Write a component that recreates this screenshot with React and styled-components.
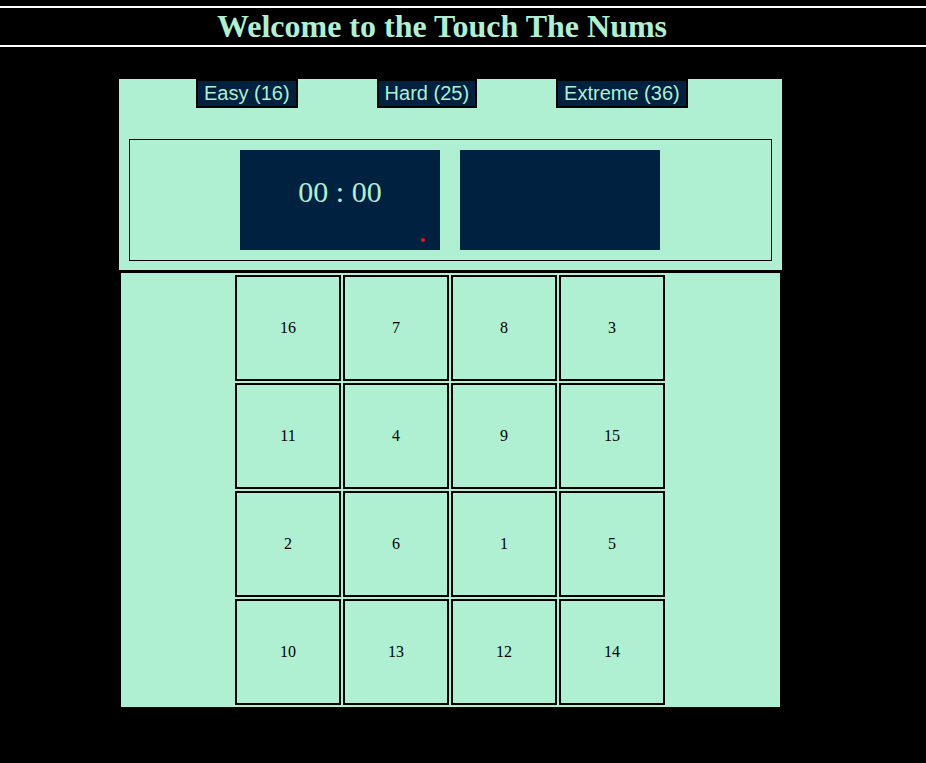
import React from "react";
import styled, { createGlobalStyle } from "styled-components";

const MINT = "#aef0d1";
const NAVY = "#002140";

const Global = createGlobalStyle`
  html, body { margin: 0; padding: 0; background: #000; }
  body { font-family: "Liberation Serif", "Times New Roman", serif; }
`;

const Page = styled.div`
  background: #000;
  min-height: 763px;
  box-sizing: border-box;
  padding-top: 6px;
`;

const Title = styled.h1`
  margin: 0;
  border-top: 2px solid #fff;
  border-bottom: 2px solid #fff;
  color: ${MINT};
  font-family: "Liberation Serif", "Times New Roman", serif;
  font-size: 32px;
  font-weight: bold;
  line-height: 37px;
  text-align: center;
  padding-right: 42px;
`;

const Game = styled.div`
  margin-top: 32px;
  display: flex;
  flex-direction: column;
  align-items: flex-start;
  padding-left: 119px;
`;

const TopPanel = styled.div`
  width: 663px;
  box-sizing: border-box;
  height: 191px;
  background: ${MINT};
  padding: 0 10px;
`;

const Levels = styled.div`
  display: flex;
  gap: 79px;
  padding-left: 67px;
`;

const LevelButton = styled.button`
  font-family: "Liberation Sans", Arial, sans-serif;
  font-size: 20px;
  line-height: 23px;
  padding: 1px 6px;
  border: 2px solid #000;
  background: ${NAVY};
  color: ${MINT};
  cursor: pointer;
`;

const Scoreboard = styled.div`
  margin-top: 31px;
  border: 1px solid #000;
  height: 122px;
  box-sizing: border-box;
  padding: 10px 0 10px 110px;
  display: flex;
  gap: 20px;
`;

const Screen = styled.div`
  position: relative;
  width: 200px;
  height: 100px;
  background: ${NAVY};
  color: ${MINT};
  font-family: "Liberation Serif", "Times New Roman", serif;
  font-size: 30px;
  text-align: center;
  box-sizing: border-box;
  padding-top: 25px;
  line-height: 33px;
`;

const Dot = styled.span`
  position: absolute;
  left: 181px;
  top: 88px;
  width: 4px;
  height: 4px;
  border-radius: 50%;
  background: #e8141e;
`;

const BottomPanel = styled.div`
  margin: 3px 0 0 2px;
  width: 659px;
  box-sizing: border-box;
  background: ${MINT};
  padding: 1px 0 1px 113px;
  display: flex;
`;

const Grid = styled.div`
  display: grid;
  grid-template-columns: repeat(4, 106px);
  grid-auto-rows: 106px;
  gap: 2px;
  padding: 1px;
`;

const Cell = styled.div`
  box-sizing: border-box;
  border: 2px solid #000;
  display: flex;
  align-items: center;
  justify-content: center;
  font-family: "Liberation Serif", "Times New Roman", serif;
  font-size: 16px;
  color: #000;
`;

const numbers = [16, 7, 8, 3, 11, 4, 9, 15, 2, 6, 1, 5, 10, 13, 12, 14];

export default function App() {
  return (
    <>
      <Global />
      <Page>
        <Title>Welcome to the Touch The Nums</Title>
        <Game>
          <TopPanel>
            <Levels>
              <LevelButton>Easy (16)</LevelButton>
              <LevelButton>Hard (25)</LevelButton>
              <LevelButton>Extreme (36)</LevelButton>
            </Levels>
            <Scoreboard>
              <Screen>
                00 : 00
                <Dot />
              </Screen>
              <Screen />
            </Scoreboard>
          </TopPanel>
          <BottomPanel>
            <Grid>
              {numbers.map((n) => (
                <Cell key={n}>{n}</Cell>
              ))}
            </Grid>
          </BottomPanel>
        </Game>
      </Page>
    </>
  );
}
